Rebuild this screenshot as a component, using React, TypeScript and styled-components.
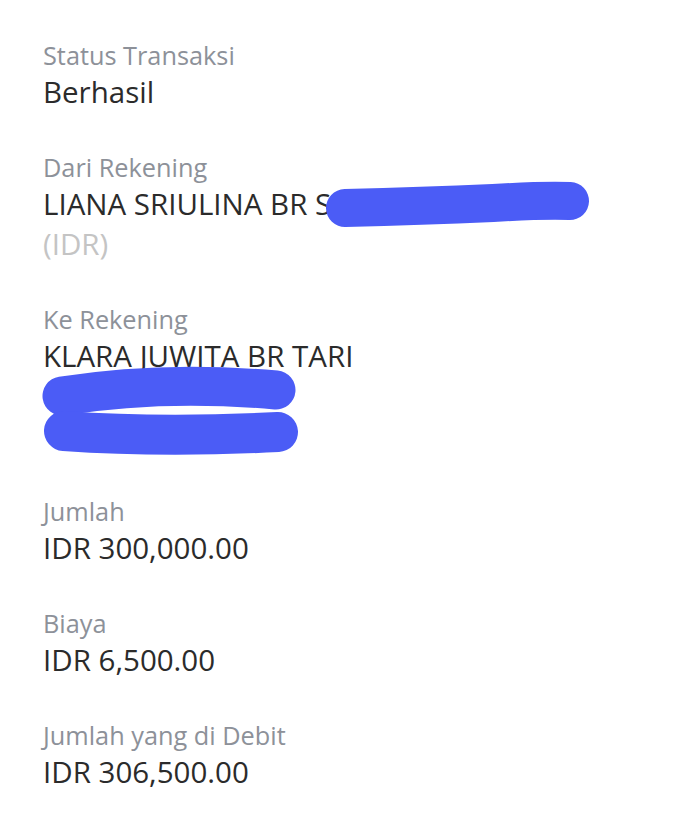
import React from 'react';
import styled, { createGlobalStyle } from 'styled-components';

const GlobalStyle = createGlobalStyle`
  html, body {
    margin: 0;
    padding: 0;
    background: #ffffff;
  }
  body {
    font-family: "Open Sans", "Noto Sans", sans-serif;
  }
`;

const Page = styled.div`
  width: 686px;
  min-height: 818px;
  box-sizing: border-box;
  padding: 38px 0 0 43px;
  display: flex;
  flex-direction: column;
  gap: 38px;
`;

const Section = styled.div`
  display: flex;
  flex-direction: column;
`;

const Label = styled.div`
  font-size: 25.3px;
  line-height: 34px;
  color: #8d9199;
`;

const ValueRow = styled.div`
  position: relative;
  font-size: 29.5px;
  line-height: 40px;
  color: #2b2b2b;
  white-space: nowrap;
`;

const SubValue = styled.div<{ $muted?: boolean }>`
  font-size: 29.5px;
  line-height: 40px;
  color: ${p => (p.$muted ? '#c4c4c4' : '#2b2b2b')};
`;

const Scribble = styled.svg`
  position: absolute;
  left: 0;
  top: 0;
  overflow: visible;
`;

const RedactedBlock = styled.div`
  position: relative;
  height: 80px;
`;

const BLUE = '#4b5cf6';

interface Row {
  label: string;
  value: string;
}

const amounts: Row[] = [
  { label: 'Jumlah', value: 'IDR 300,000.00' },
  { label: 'Biaya', value: 'IDR 6,500.00' },
  { label: 'Jumlah yang di Debit', value: 'IDR 306,500.00' },
];

export default function App() {
  return (
    <>
      <GlobalStyle />
      <Page>
        <Section>
          <Label>Status Transaksi</Label>
          <ValueRow>Berhasil</ValueRow>
        </Section>

        <Section>
          <Label>Dari Rekening</Label>
          <ValueRow>
            LIANA SRIULINA BR S
            <Scribble width="560" height="40">
              <path
                d="M302 24 Q 380 22, 450 19 Q 500 16, 527 17"
                fill="none"
                stroke={BLUE}
                strokeWidth="38"
                strokeLinecap="round"
              />
            </Scribble>
          </ValueRow>
          <SubValue $muted>(IDR)</SubValue>
        </Section>

        <Section>
          <Label>Ke Rekening</Label>
          <ValueRow>KLARA JUWITA BR TARI</ValueRow>
          <RedactedBlock>
            <Scribble width="300" height="80">
              <path
                d="M19 20 Q 120 4, 233 14"
                fill="none"
                stroke={BLUE}
                strokeWidth="39"
                strokeLinecap="round"
              />
              <path
                d="M21 55 Q 120 62, 235 56"
                fill="none"
                stroke={BLUE}
                strokeWidth="40"
                strokeLinecap="round"
              />
            </Scribble>
          </RedactedBlock>
        </Section>

        {amounts.map(row => (
          <Section key={row.label}>
            <Label>{row.label}</Label>
            <ValueRow>{row.value}</ValueRow>
          </Section>
        ))}
      </Page>
    </>
  );
}
